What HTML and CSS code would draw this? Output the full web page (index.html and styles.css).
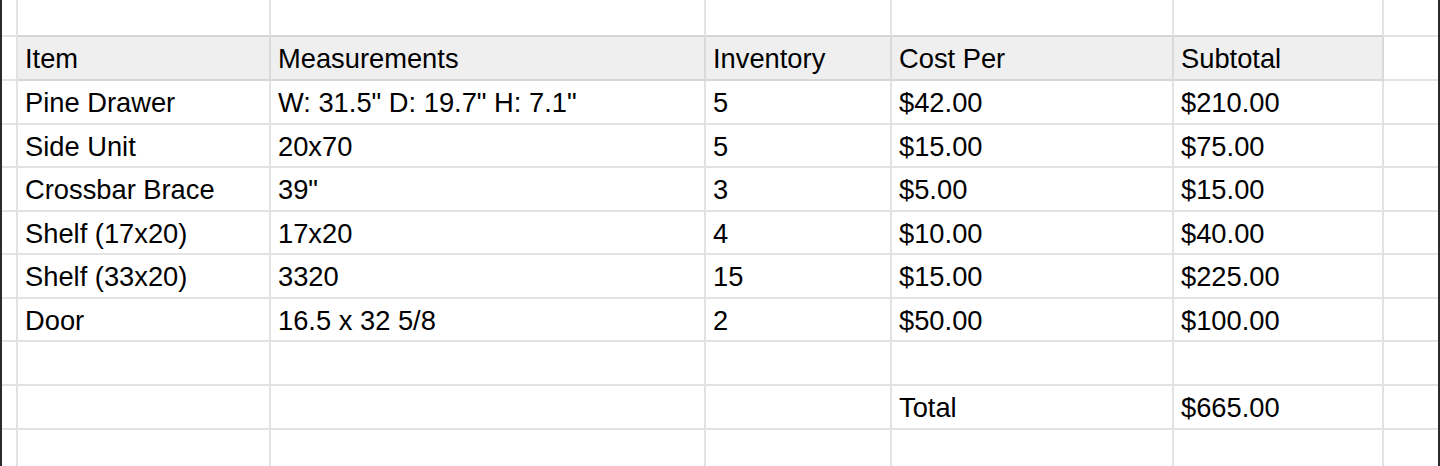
FILE: index.html
```html
<!DOCTYPE html>
<html>
<head>
<meta charset="utf-8">
<link rel="stylesheet" href="styles.css">
</head>
<body>
<div class="sheet">
  <div class="row r37"><div></div><div></div><div></div><div></div><div></div><div></div><div></div></div>
  <div class="row hdr r44"><div></div><div class="c">Item</div><div class="c">Measurements</div><div class="c">Inventory</div><div class="c">Cost Per</div><div class="c">Subtotal</div><div></div></div>
  <div class="row r44"><div></div><div class="c">Pine Drawer</div><div class="c">W: 31.5" D: 19.7" H: 7.1"</div><div class="c">5</div><div class="c">$42.00</div><div class="c">$210.00</div><div></div></div>
  <div class="row r43"><div></div><div class="c">Side Unit</div><div class="c">20x70</div><div class="c">5</div><div class="c">$15.00</div><div class="c">$75.00</div><div></div></div>
  <div class="row r44"><div></div><div class="c">Crossbar Brace</div><div class="c">39"</div><div class="c">3</div><div class="c">$5.00</div><div class="c">$15.00</div><div></div></div>
  <div class="row r43"><div></div><div class="c">Shelf (17x20)</div><div class="c">17x20</div><div class="c">4</div><div class="c">$10.00</div><div class="c">$40.00</div><div></div></div>
  <div class="row r44"><div></div><div class="c">Shelf (33x20)</div><div class="c">3320</div><div class="c">15</div><div class="c">$15.00</div><div class="c">$225.00</div><div></div></div>
  <div class="row r43"><div></div><div class="c">Door</div><div class="c">16.5 x 32 5/8</div><div class="c">2</div><div class="c">$50.00</div><div class="c">$100.00</div><div></div></div>
  <div class="row r44"><div></div><div></div><div></div><div></div><div></div><div></div><div></div></div>
  <div class="row r44"><div></div><div></div><div></div><div></div><div class="c">Total</div><div class="c">$665.00</div><div></div></div>
  <div class="row r44"><div></div><div></div><div></div><div></div><div></div><div></div><div></div></div>
</div>
</body>
</html>
```
FILE: styles.css
```css
html, body {
  margin: 0;
  padding: 0;
  background: #fff;
}
.sheet {
  width: 1440px;
  height: 466px;
  overflow: hidden;
  box-sizing: border-box;
  border-left: 2px solid #2a2a2a;
  border-right: 2px solid #2a2a2a;
  font-family: "Liberation Sans", Arial, sans-serif;
  font-size: 27.3px;
  color: #000;
}
.row {
  display: grid;
  grid-template-columns: 16px 253px 435px 186px 282px 210px 54px;
}
.row > div {
  box-sizing: border-box;
  border-right: 2px solid #e3e3e3;
  border-bottom: 2px solid #e3e3e3;
  white-space: nowrap;
  overflow: hidden;
}
.row > div:last-child {
  border-right: none;
}
.r37 { height: 37px; }
.r44 { height: 44px; }
.r43 { height: 43px; }
.c {
  display: flex;
  align-items: center;
  padding-left: 7px;
  padding-top: 2px;
}
.r37 > div:nth-child(n+2):nth-child(-n+6) {
  border-bottom-color: #d6d6d6;
}
.hdr > div:nth-child(n+2):nth-child(-n+6) {
  background: #efefef;
  border-bottom-color: #d6d6d6;
  border-right-color: #dadada;
}
```
